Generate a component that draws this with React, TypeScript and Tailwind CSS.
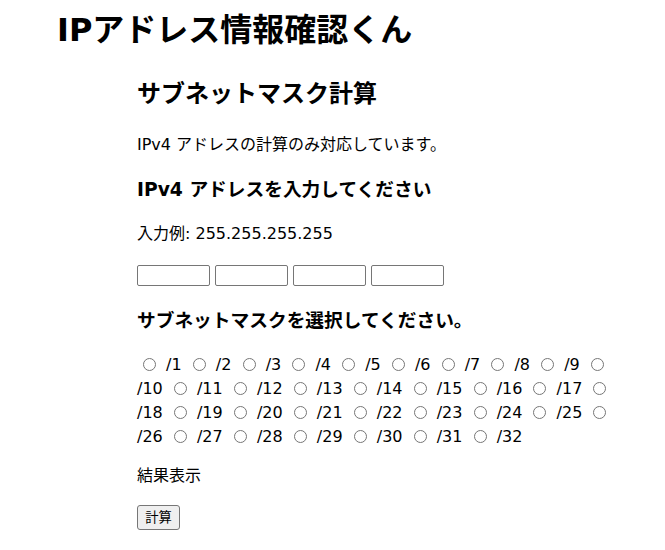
import React from "react";

const masks = Array.from({ length: 32 }, (_, i) => i + 1);

export default function App() {
  return (
    <div
      className="min-h-screen bg-white text-black"
      style={{ fontFamily: '"DejaVu Sans", "Noto Sans CJK JP", sans-serif' }}
    >
      <h1 className="pl-[57px] pt-[10px] text-[32px] leading-[40px] font-bold">
        IPアドレス情報確認くん
      </h1>
      <main className="ml-[137px] w-[475px]">
        <h2 className="mt-[28px] text-[24px] leading-[32px] font-bold">
          サブネットマスク計算
        </h2>
        <p className="mt-[23px] text-[16px] leading-[24px]">
          IPv4 アドレスの計算のみ対応しています。
        </p>
        <h3 className="mt-[20px] text-[18.72px] leading-[26px] font-bold">
          IPv4 アドレスを入力してください
        </h3>
        <p className="mt-[19px] text-[16px] leading-[24px]">
          入力例: 255.255.255.255
        </p>
        <div className="mt-[19px] flex gap-[5px]">
          {[0, 1, 2, 3].map((i) => (
            <input
              key={i}
              type="text"
              className="h-[21px] w-[73px] rounded-[2px] border border-[#767676] bg-white px-[2px] text-[13px]"
            />
          ))}
        </div>
        <h3 className="mt-[22px] text-[18.72px] leading-[26px] font-bold">
          サブネットマスクを選択してください。
        </h3>
        <div className="mt-[19px] text-[16px] leading-[24px]">
          {masks.map((m) => (
            <React.Fragment key={m}>
              <input
                type="radio"
                name="mask"
                value={m}
                className="ml-[6px] mr-[5px] mt-[3px] inline-block h-[13px] w-[13px] align-[-1px]"
              />{" "}
              <span>/{m}</span>{" "}
            </React.Fragment>
          ))}
        </div>
        <p className="mt-[15px] text-[16px] leading-[24px]">結果表示</p>
        <button
          type="button"
          className="mt-[17px] h-[25px] w-[43px] rounded-[3px] border border-[#767676] bg-[#efefef] text-[13.33px]"
        >
          計算
        </button>
      </main>
    </div>
  );
}
